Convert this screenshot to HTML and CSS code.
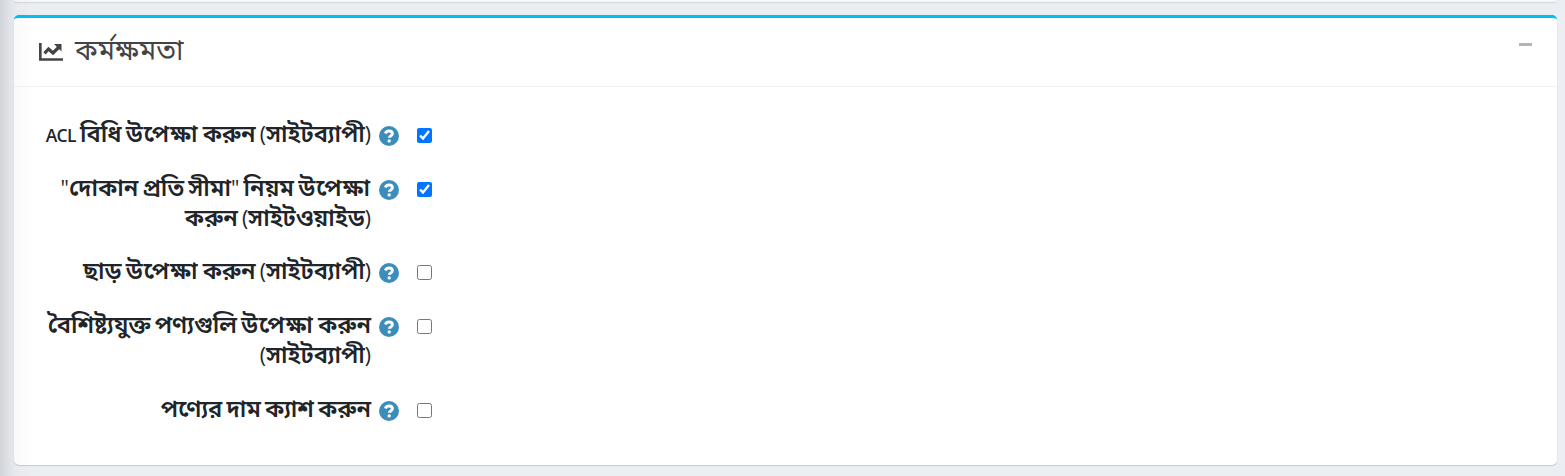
FILE: index.html
```
<!DOCTYPE html>
<html lang="bn">
<head>
<meta charset="utf-8">
<title>কর্মক্ষমতা</title>
<link rel="stylesheet" href="styles.css">
</head>
<body>
<svg class="symbols" aria-hidden="true">
  <symbol id="help" viewBox="0 0 20 20"><circle cx="10" cy="10" r="10" fill="#3c8dbc"/><path d="M6.400 7.500C6.900 5.800 8.200 5 10 5c2 0 3.400 1.100 3.400 2.800 0 2.200-3.100 2.100-3.100 4" fill="none" stroke="#fff" stroke-width="2.900"/><circle cx="10.200" cy="14.900" r="1.700" fill="#fff"/></symbol>
</svg>
<div class="previous"></div>
<section class="card">
  <header class="card-header">
    <svg class="chart" viewBox="0 0 24 18"><path d="M1.300 0v16.500H24" fill="none" stroke="#444" stroke-width="2.700"/><path d="M5.500 10.300 9.500 6l4.500 4L20 4" fill="none" stroke="#444" stroke-width="3.200"/><path d="M15 1h7.500v7.500z" fill="#444"/></svg>
    <h1>কর্মক্ষমতা</h1>
    <span class="minus"></span>
  </header>
  <div class="card-body">
    <div class="row"><label><span class="latin">ACL</span> বিধি <span class="wide">উপেক্ষা</span> করুন <i>(</i>সাইটব্যাপী<i>)</i></label><svg class="help"><use href="#help"/></svg><input type="checkbox" checked></div>
    <div class="row"><label><i>"</i>দোকান প্রতি সীমা<i>"</i> নিয়ম <span class="wide">উপেক্ষা</span><br>করুন <i>(</i>সাইটওয়াইড<i>)</i></label><svg class="help"><use href="#help"/></svg><input type="checkbox" checked></div>
    <div class="row"><label>ছাড় <span class="wide">উপেক্ষা</span> করুন <i>(</i>সাইটব্যাপী<i>)</i></label><svg class="help"><use href="#help"/></svg><input type="checkbox"></div>
    <div class="row"><label>বৈশিষ্ট্যযুক্ত পণ্যগুলি <span class="wide">উপেক্ষা</span> করুন<br><i>(</i>সাইটব্যাপী<i>)</i></label><svg class="help"><use href="#help"/></svg><input type="checkbox"></div>
    <div class="row"><label>পণ্যের দাম ক্যাশ করুন</label><svg class="help"><use href="#help"/></svg><input type="checkbox"></div>
  </div>
</section>
<div class="edge-shadow"></div>
</body>
</html>
```
FILE: styles.css
```
* { box-sizing: border-box; }
body { margin: 0; height: 476px; overflow: hidden; background: #ebeef3; color: #212529; font-family: "Noto Sans Bengali", "Noto Sans", sans-serif; }
.symbols { display: none; }
.previous { height: 2px; margin: 0 8px 13px 14px; background: #f7f7f8; border-radius: 0 0 4px 4px; box-shadow: 0 1px 1px #d3d5da; }
.card { height: 450px; margin: 0 8px 0 14px; background: #fff; border-top: 3px solid #00c0ef; border-radius: 5px; box-shadow: 0 1px 1px rgba(0,0,0,.14), 0 0 1px rgba(0,0,0,.12); }
.card-header { display: flex; align-items: flex-start; height: 69px; padding: 0 25px; border-bottom: 1px solid #f2f2f2; }
.chart { width: 24px; height: 18px; margin: 25px 12px 0 0; }
h1 { margin: 17px 0 0; color: #444; font-size: 28.100px; font-weight: 400; line-height: 36px; white-space: nowrap; }
.minus { width: 13px; height: 3px; margin: 25px 0 0 auto; background: #adb5bd; }
.card-body { display: flex; flex-direction: column; gap: 22.700px; padding: 33px 0 0 20px; }
.row { display: flex; align-items: flex-start; }
label { width: 337px; padding-top: 1px; text-align: right; white-space: nowrap; font-size: 23.700px; font-weight: 600; line-height: 30px; word-spacing: -2px; }
label i { font-family: "Open Sans", sans-serif; font-size: 21px; font-style: normal; font-weight: 500; line-height: 1; }
.wide { letter-spacing: 1px; }
.latin { font-family: "Open Sans", sans-serif; font-size: 17.500px; font-weight: 600; line-height: 1; letter-spacing: -.7px; }
.help { width: 20px; height: 20px; margin: 6px 18px 0 8px; }
input { width: 15px; height: 15px; margin: 8px 0 0; }
.edge-shadow { position: absolute; inset: 0 auto 0 0; width: 36px; background: linear-gradient(90deg, rgba(0,0,0,.11), rgba(0,0,0,.045) 10px, rgba(0,0,0,.018) 16px, transparent); pointer-events: none; }
```
